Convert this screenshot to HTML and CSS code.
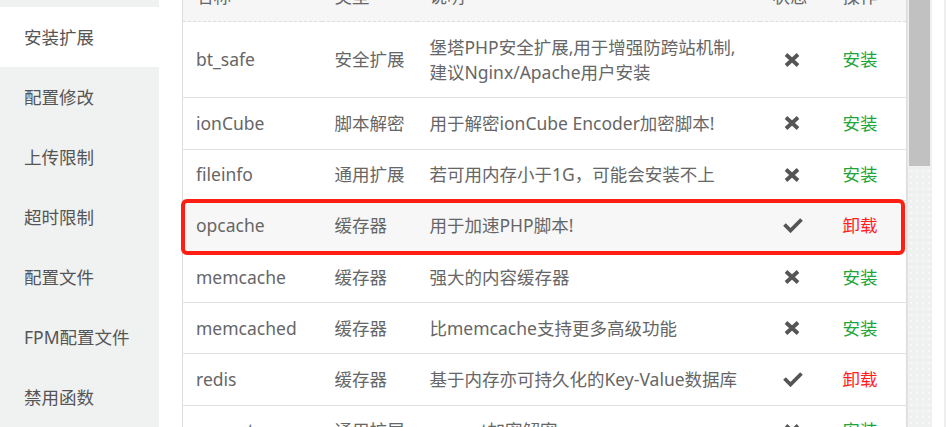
FILE: index.html
```html
<!DOCTYPE html>
<html lang="zh-CN">
<head>
<meta charset="utf-8">
<title>PHP扩展</title>
<link rel="stylesheet" href="styles.css">
</head>
<body>
<div class="page">
  <nav class="side">
    <div class="side-item">服务</div>
    <div class="side-item active">安装扩展</div>
    <div class="side-item">配置修改</div>
    <div class="side-item">上传限制</div>
    <div class="side-item">超时限制</div>
    <div class="side-item">配置文件</div>
    <div class="side-item">FPM配置文件</div>
    <div class="side-item">禁用函数</div>
  </nav>
  <main class="main">
    <table class="ext-table">
      <colgroup>
        <col class="c-name"><col class="c-type"><col class="c-desc"><col class="c-state"><col class="c-op">
      </colgroup>
      <thead>
        <tr><th>名称</th><th>类型</th><th>说明</th><th>状态</th><th>操作</th></tr>
      </thead>
      <tbody>
        <tr>
          <td>bt_safe</td><td>安全扩展</td>
          <td>堡塔PHP安全扩展,用于增强防跨站机制,<br>建议Nginx/Apache用户安装</td>
          <td><svg class="ico-x" viewBox="0 0 16 14"><path d="M2 1.5 L14 12.5 M14 1.5 L2 12.5"/></svg></td>
          <td><span class="act-install">安装</span></td>
        </tr>
        <tr>
          <td>ionCube</td><td>脚本解密</td><td>用于解密ionCube Encoder加密脚本!</td>
          <td><svg class="ico-x" viewBox="0 0 16 14"><path d="M2 1.5 L14 12.5 M14 1.5 L2 12.5"/></svg></td>
          <td><span class="act-install">安装</span></td>
        </tr>
        <tr>
          <td>fileinfo</td><td>通用扩展</td><td>若可用内存小于1G，可能会安装不上</td>
          <td><svg class="ico-x" viewBox="0 0 16 14"><path d="M2 1.5 L14 12.5 M14 1.5 L2 12.5"/></svg></td>
          <td><span class="act-install">安装</span></td>
        </tr>
        <tr class="hover">
          <td>opcache</td><td>缓存器</td><td>用于加速PHP脚本!</td>
          <td><svg class="ico-ok" viewBox="0 0 20 15"><path d="M1.5 6.5 L7.5 12.5 L18.5 1.5"/></svg></td>
          <td><span class="act-remove">卸载</span></td>
        </tr>
        <tr>
          <td>memcache</td><td>缓存器</td><td>强大的内容缓存器</td>
          <td><svg class="ico-x" viewBox="0 0 16 14"><path d="M2 1.5 L14 12.5 M14 1.5 L2 12.5"/></svg></td>
          <td><span class="act-install">安装</span></td>
        </tr>
        <tr>
          <td>memcached</td><td>缓存器</td><td>比memcache支持更多高级功能</td>
          <td><svg class="ico-x" viewBox="0 0 16 14"><path d="M2 1.5 L14 12.5 M14 1.5 L2 12.5"/></svg></td>
          <td><span class="act-install">安装</span></td>
        </tr>
        <tr>
          <td>redis</td><td>缓存器</td><td>基于内存亦可持久化的Key-Value数据库</td>
          <td><svg class="ico-ok" viewBox="0 0 20 15"><path d="M1.5 6.5 L7.5 12.5 L18.5 1.5"/></svg></td>
          <td><span class="act-remove">卸载</span></td>
        </tr>
        <tr>
          <td>mcrypt</td><td>通用扩展</td><td>mcrypt加密解密</td>
          <td><svg class="ico-x" viewBox="0 0 16 14"><path d="M2 1.5 L14 12.5 M14 1.5 L2 12.5"/></svg></td>
          <td><span class="act-install">安装</span></td>
        </tr>
      </tbody>
    </table>
    <div class="highlight"></div>
  </main>
  <div class="scroll">
    <div class="thumb"></div>
  </div>
  <div class="edge"></div>
</div>
</body>
</html>
```

FILE: styles.css
```css
html, body {
  margin: 0;
  padding: 0;
  height: 100%;
  overflow: hidden;
  background: #fff;
}
body {
  font-family: "Noto Sans", "Noto Sans CJK SC", sans-serif;
  font-size: 17.5px;
  color: #666;
}
.page {
  display: flex;
  height: 427px;
  overflow: hidden;
}
.side {
  width: 159px;
  flex: none;
  background: #f0f1f1;
  margin-top: -53px;
}
.side-item {
  height: 60px;
  line-height: 60px;
  padding-left: 24px;
  color: #555;
  white-space: nowrap;
}
.side-item.active {
  background: #fff;
}
.main {
  flex: 1;
  position: relative;
  padding-left: 23px;
  min-width: 0;
}
.ext-table {
  width: 724px;
  table-layout: fixed;
  border-collapse: collapse;
  margin-top: -29px;
  border-left: 1px solid #ddd;
  border-right: 1px solid #ddd;
}
.c-name { width: 139px; }
.c-type { width: 95px; }
.c-desc { width: 343px; }
.c-state { width: 70px; }
.c-op { width: 77px; }
.ext-table th,
.ext-table td {
  padding: 12.6px 0 12.6px 13px;
  line-height: 25px;
  text-align: left;
  font-weight: normal;
  vertical-align: middle;
  white-space: nowrap;
  border-bottom: 1px solid #e2e2e2;
}
.ext-table th {
  background: #f6f6f6;
  border-bottom: 1px dashed #ddd;
}
.ext-table tr.hover td {
  background: #f7f7f7;
}
.ext-table svg {
  display: block;
}
.ico-x {
  width: 16px;
  height: 14px;
  margin-left: 11px;
  fill: none;
  stroke: #555;
  stroke-width: 3.8;
}
.ico-ok {
  width: 20px;
  height: 15px;
  margin-left: 10px;
  fill: none;
  stroke: #555;
  stroke-width: 3.8;
  stroke-linejoin: miter;
}
.act-install { color: #20a53a; }
.act-remove { color: #ff1f1f; }
.highlight {
  position: absolute;
  left: 22px;
  top: 199px;
  width: 724px;
  height: 56px;
  box-sizing: border-box;
  border: 4px solid #ff1e12;
  border-radius: 6px;
}
.scroll {
  width: 26px;
  flex: none;
  box-sizing: border-box;
  border-left: 2px solid #e4e4e4;
  background-color: #eff0f0;
  background-image: radial-gradient(circle, #f8f8f8 0.8px, transparent 1px);
  background-size: 6px 6px;
  padding: 0 2px 0 1px;
}
.thumb {
  height: 166px;
  background: #c1c1c1;
}
.edge {
  width: 14px;
  flex: none;
  box-sizing: border-box;
  border-right: 2px solid #eeeeee;
}
```
